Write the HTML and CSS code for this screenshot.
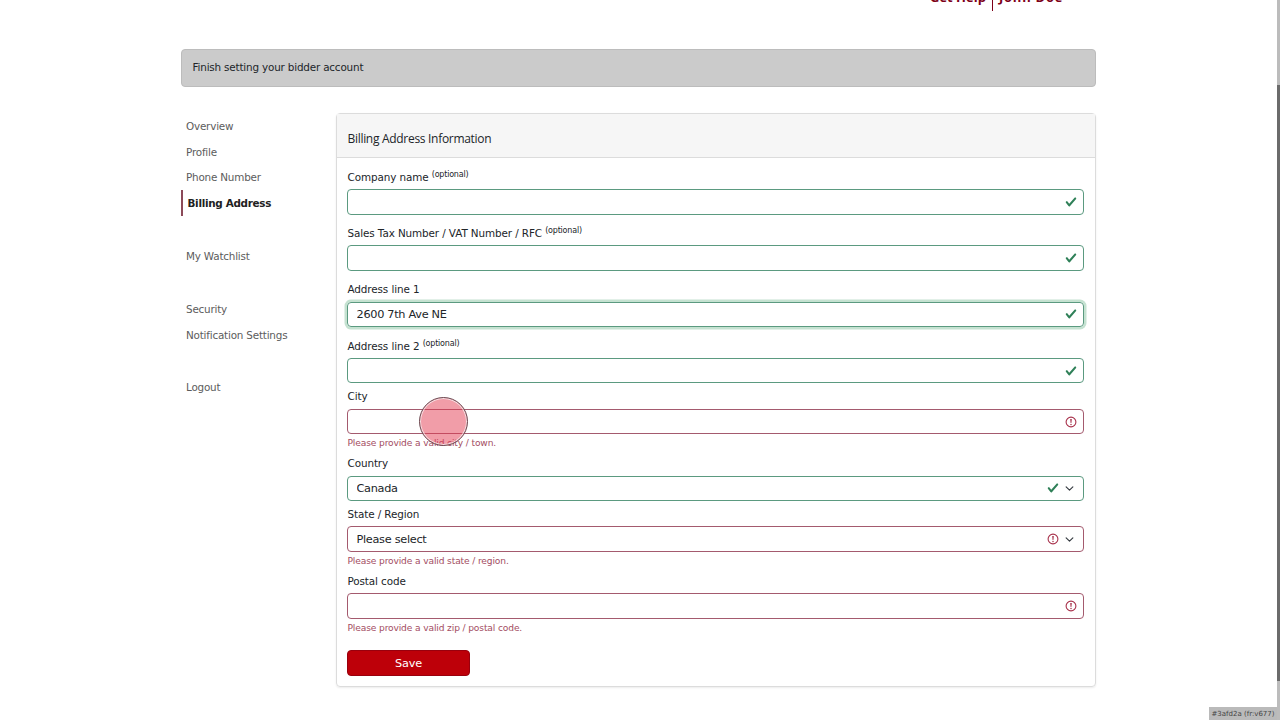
FILE: index.html
```
<!DOCTYPE html>
<html lang="en">
<head>
  <meta charset="UTF-8">
  <title>Billing Address</title>
  <link rel="stylesheet" href="styles.css">
</head>
<body>
  <!-- Shared icons -->
  <svg class="icon-defs" width="0" height="0">
    <symbol id="check" viewBox="0 0 8 8">
      <path d="M2.3 6.73L.6 4.53c-.4-1.04.46-1.4 1.1-.8l1.1 1.4 3.4-3.8c.6-.63 1.6-.27 1.2.7l-4 4.6c-.43.5-.8.4-1.1.1z"/>
    </symbol>
    <symbol id="alert" viewBox="0 0 12 12">
      <circle cx="6" cy="6" r="4.9" fill="none" stroke="currentColor" stroke-width="1.1"/>
      <path d="M5.2 2.9h1.6L6.4 6.9h-.8z"/>
      <circle cx="6" cy="8.5" r=".75"/>
    </symbol>
    <symbol id="chevron" viewBox="0 0 16 16">
      <path d="M2 5l6 6 6-6" fill="none" stroke="#343a40" stroke-width="2" stroke-linecap="round" stroke-linejoin="round"/>
    </symbol>
  </svg>

  <header class="top-links">
    <a class="help">Get Help</a>
    <a class="user">John Doe</a>
  </header>

  <main class="container">
    <div class="notice">Finish setting your bidder account</div>

    <div class="columns">
      <!-- Account menu -->
      <nav class="side-nav">
        <a>Overview</a>
        <a>Profile</a>
        <a>Phone Number</a>
        <a class="active">Billing Address</a>
        <a class="group-start">My Watchlist</a>
        <a class="group-start">Security</a>
        <a>Notification Settings</a>
        <a class="group-start">Logout</a>
      </nav>

      <section class="card">
        <h1 class="card-header">Billing Address Information</h1>
        <form class="card-body">
          <div class="field spaced">
            <label for="company">Company name <sup>(optional)</sup></label>
            <div class="control valid">
              <input type="text" id="company">
              <svg class="icon"><use href="#check"/></svg>
            </div>
          </div>
          <div class="field spaced">
            <label for="tax">Sales Tax Number / VAT Number / RFC <sup>(optional)</sup></label>
            <div class="control valid">
              <input type="text" id="tax">
              <svg class="icon"><use href="#check"/></svg>
            </div>
          </div>
          <div class="field spaced">
            <label for="address1">Address line 1</label>
            <div class="control valid focused">
              <input type="text" id="address1" value="2600 7th Ave NE">
              <svg class="icon"><use href="#check"/></svg>
            </div>
          </div>
          <div class="field">
            <label for="address2">Address line 2 <sup>(optional)</sup></label>
            <div class="control valid">
              <input type="text" id="address2">
              <svg class="icon"><use href="#check"/></svg>
            </div>
          </div>
          <div class="field">
            <label for="city">City</label>
            <div class="control invalid">
              <input type="text" id="city">
              <svg class="icon"><use href="#alert"/></svg>
            </div>
            <div class="feedback">Please provide a valid city / town.</div>
          </div>
          <div class="field">
            <label for="country">Country</label>
            <div class="control valid">
              <select id="country"><option>Canada</option></select>
              <svg class="icon"><use href="#check"/></svg>
              <svg class="chevron"><use href="#chevron"/></svg>
            </div>
          </div>
          <div class="field">
            <label for="state">State / Region</label>
            <div class="control invalid">
              <select id="state"><option>Please select</option></select>
              <svg class="icon"><use href="#alert"/></svg>
              <svg class="chevron"><use href="#chevron"/></svg>
            </div>
            <div class="feedback">Please provide a valid state / region.</div>
          </div>
          <div class="field">
            <label for="postal">Postal code</label>
            <div class="control invalid">
              <input type="text" id="postal">
              <svg class="icon"><use href="#alert"/></svg>
            </div>
            <div class="feedback">Please provide a valid zip / postal code.</div>
          </div>
          <button type="button" class="save">Save</button>
        </form>
      </section>
    </div>
  </main>

  <div class="pointer"></div>
  <div class="version">#3afd2a (fr:v677)</div>
  <div class="scrollbar"><div class="thumb"></div></div>
</body>
</html>
```

FILE: styles.css
```
* {
  box-sizing: border-box;
}
body {
  margin: 0;
  height: 720px;
  overflow: hidden;
  position: relative;
  background: #fff;
  color: #212529;
  font-family: Verdana, "DejaVu Sans", sans-serif;
  font-size: 10.4px;
}
.icon-defs {
  position: absolute;
}
.container {
  width: 915px;
  margin-left: 181px;
}

/* Header links */
.top-links {
  display: flex;
  height: 19px;
  margin-top: -8px;
  margin-left: 930px;
  line-height: 10px;
  font-family: "Open Sans", "Noto Sans", sans-serif;
  font-size: 13px;
  font-weight: 700;
  color: #7d0018;
}
.help {
  width: 63px;
  border-right: 1px solid #7d0018;
}
.user {
  padding-left: 6px;
  letter-spacing: 0.75px;
}

.notice {
  height: 38px;
  margin-top: 38px;
  padding-left: 10.5px;
  border: 1px solid #bcbcbc;
  border-radius: 4px;
  background: #cbcbcb;
  line-height: 35px;
  letter-spacing: -0.18px;
}
.columns {
  display: flex;
  margin-top: 26px;
}

/* Side menu */
.side-nav {
  width: 155px;
  color: #5c5c5c;
  letter-spacing: -0.2px;
}
.side-nav a {
  display: block;
  height: 25.7px;
  padding-left: 5px;
  line-height: 27.5px;
}
.side-nav .active {
  padding-left: 4.5px;
  border-left: 2px solid #8c4a59;
  color: #212121;
  font-weight: 700;
  letter-spacing: -0.3px;
}
.side-nav .group-start {
  margin-top: 27.2px;
}

/* Form card */
.card {
  width: 760px;
  height: 574px;
  border: 1px solid #dcdcdc;
  border-radius: 4px;
  box-shadow: 0 1px 2px rgba(0, 0, 0, 0.08);
}
.card-header {
  height: 44px;
  margin: 0;
  padding: 3px 0 0 10.5px;
  border-bottom: 1px solid #dcdcdc;
  background: #f6f6f6;
  line-height: 43px;
  font-family: "Open Sans", "Noto Sans", sans-serif;
  font-size: 12px;
  font-weight: 400;
  letter-spacing: -0.3px;
}
.card-body {
  padding: 5.7px 11px 0 10px;
}
.field.spaced {
  margin-bottom: 5.4px;
}
.field label {
  display: block;
  height: 25.4px;
  padding-left: 0.5px;
  line-height: 26.6px;
  letter-spacing: -0.1px;
}
.field sup {
  position: relative;
  top: -3.5px;
  font-size: 8px;
  line-height: 0;
  vertical-align: baseline;
  letter-spacing: -0.2px;
}
.control {
  display: flex;
  align-items: center;
  height: 25.5px;
  padding: 0 6px 0 8px;
  border: 1px solid;
  border-radius: 4px;
}
.control input,
.control select {
  flex: 1;
  min-width: 0;
  height: 100%;
  padding: 0 0 0 0.5px;
  border: 0;
  outline: 0;
  background: transparent;
  appearance: none;
  color: #212529;
  font: inherit;
  font-size: 11.3px;
  letter-spacing: -0.3px;
}
.valid {
  border-color: #5b9a80;
}
.invalid {
  border-color: #a45a6e;
}
.focused {
  box-shadow: 0 0 0 2.5px #c5e2d1;
}
.icon {
  width: 12px;
  height: 12px;
}
.valid .icon {
  fill: #2f8058;
}
.invalid .icon {
  color: #a8324c;
  fill: #a8324c;
}
.chevron {
  width: 9px;
  height: 9px;
  margin: 0 3px 0 6px;
}
.feedback {
  height: 15.9px;
  padding: 2px 0 0 0.5px;
  line-height: 15.9px;
  font-size: 9.1px;
  letter-spacing: -0.13px;
  color: #a34d62;
}
.save {
  display: block;
  width: 123px;
  height: 26px;
  margin-top: 15.8px;
  padding: 0;
  border: 1px solid #99000d;
  border-radius: 4px;
  background: #bd0009;
  color: #fff;
  font: inherit;
  font-size: 11.3px;
  letter-spacing: -0.2px;
}

/* Click marker */
.pointer {
  position: absolute;
  left: 419px;
  top: 397px;
  width: 49px;
  height: 49px;
  border: 1px solid #6b4a52;
  border-radius: 50%;
  background: rgba(228, 60, 82, 0.5);
  box-shadow: inset 0 0 0 1px #f7dfe2;
}

.version {
  position: absolute;
  right: 3px;
  bottom: 0;
  width: 68px;
  height: 13px;
  background: #bababa;
  color: #444;
  line-height: 14px;
  text-align: center;
  font-size: 7px;
}
.scrollbar {
  position: absolute;
  top: 0;
  right: 0;
  width: 3px;
  height: 720px;
  padding-top: 85px;
  background: #bcbcbc;
}
.thumb {
  height: 596px;
  background: #6b6b6b;
}
```
